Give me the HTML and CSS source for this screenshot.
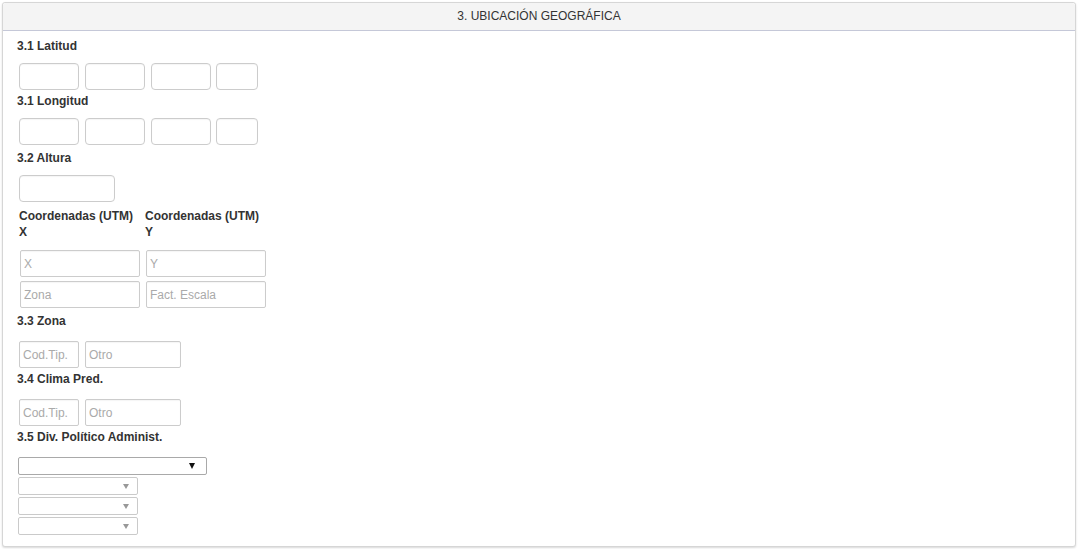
FILE: index.html
```html
<!DOCTYPE html>
<html lang="es">
<head>
<meta charset="utf-8">
<title>Ubicación geográfica</title>
<link rel="stylesheet" href="styles.css">
</head>
<body>
<div class="panel">
  <div class="panel-heading">3. UBICACIÓN GEOGRÁFICA</div>
  <div class="panel-body">
    <div class="lbl">3.1 Latitud</div>
    <div class="row r-lat">
      <input class="inp w60" type="text">
      <input class="inp w60" type="text">
      <input class="inp w60" type="text">
      <input class="inp w42 last" type="text">
    </div>
    <div class="lbl">3.1 Longitud</div>
    <div class="row r-lon">
      <input class="inp w60" type="text">
      <input class="inp w60" type="text">
      <input class="inp w60" type="text">
      <input class="inp w42 last" type="text">
    </div>
    <div class="lbl">3.2 Altura</div>
    <div class="row r-alt">
      <input class="inp w96" type="text">
    </div>
    <div class="coords">
      <div class="col">
        <div class="lbl2">Coordenadas (UTM) X</div>
        <input class="inp w120 sq" type="text" placeholder="X">
        <input class="inp w120 sq" type="text" placeholder="Zona">
      </div>
      <div class="col">
        <div class="lbl2">Coordenadas (UTM) Y</div>
        <input class="inp w120 sq" type="text" placeholder="Y">
        <input class="inp w120 sq" type="text" placeholder="Fact. Escala">
      </div>
    </div>
    <div class="lbl">3.3 Zona</div>
    <div class="row r-zona">
      <input class="inp w60 sq" type="text" placeholder="Cod.Tip.">
      <input class="inp w96 sq" type="text" placeholder="Otro">
    </div>
    <div class="lbl">3.4 Clima Pred.</div>
    <div class="row r-clima">
      <input class="inp w60 sq" type="text" placeholder="Cod.Tip.">
      <input class="inp w96 sq" type="text" placeholder="Otro">
    </div>
    <div class="lbl">3.5 Div. Político Administ.</div>
    <div class="selects">
      <div class="sel sel-wide"><select><option></option></select></div>
      <div class="sel sel-narrow off"><select disabled><option></option></select></div>
      <div class="sel sel-narrow off"><select disabled><option></option></select></div>
      <div class="sel sel-narrow off"><select disabled><option></option></select></div>
    </div>
  </div>
</div>
</body>
</html>
```
FILE: styles.css
```css
* { box-sizing: border-box; }
html, body { margin: 0; padding: 0; background: #fff; }
body {
  font-family: "Liberation Sans", Arial, sans-serif;
  font-size: 12px;
  color: #333;
  padding: 2px 4px 2px 2px;
}
.panel {
  border: 1px solid #d6d6d6;
  border-radius: 3px;
  box-shadow: 0 1px 2px rgba(0,0,0,0.15);
  height: 545px;
  background: #fff;
}
.panel-heading {
  background: #f4f4f4;
  height: 28px;
  line-height: 27px;
  text-align: center;
  border-bottom: 1px solid #c5c8d8;
  border-radius: 3px 3px 0 0;
  color: #333;
}
.panel-body {
  padding: 7px 14px 0 14px;
}
.lbl {
  font-weight: bold;
  line-height: 17px;
  height: 17px;
}
.row {
  display: flex;
  gap: 6px;
  padding-left: 2px;
  margin-top: 8px;
}
.row .last { margin-left: -1px; }
.r-lat { margin-bottom: 3px; }
.r-lon { margin-bottom: 5px; }
.r-alt { margin-bottom: 6px; }
.r-zona { margin-bottom: 3px; margin-top: 11px; }
.r-clima { margin-bottom: 3px; margin-top: 11px; }
.inp {
  display: block;
  height: 27px;
  border: 1px solid #ccc;
  border-radius: 4px;
  font-family: "Liberation Sans", Arial, sans-serif;
  font-size: 12px;
  padding: 0 4px;
  margin: 0;
  color: #555;
  background: #fff;
  box-shadow: inset 0 1px 1px rgba(0,0,0,0.04);
}
.inp.sq { border-radius: 2px; padding: 0 3px; }
.inp::placeholder { color: #aaa; }
.w60 { width: 60px; }
.w42 { width: 42px; }
.w96 { width: 96px; }
.w120 { width: 120px; }
.coords {
  display: flex;
  padding-left: 2px;
  margin-bottom: 5px;
}
.col {
  width: 126px;
  display: flex;
  flex-direction: column;
  gap: 4px;
}
.col .inp { margin-left: 1px; }
.lbl2 {
  font-weight: bold;
  line-height: 16px;
  width: 120px;
  margin-bottom: 6px;
}
.selects {
  margin-top: 11px;
  padding-left: 1px;
  display: flex;
  flex-direction: column;
  gap: 2px;
}
.sel {
  position: relative;
  height: 18px;
}
.sel select {
  appearance: none;
  -webkit-appearance: none;
  width: 100%;
  height: 18px;
  border: 1px solid #a9a9a9;
  border-radius: 2px;
  background: #fff;
  margin: 0;
  padding: 0 2px;
  font-family: "Liberation Sans", Arial, sans-serif;
  font-size: 12px;
}
.sel.off select { border-color: #b5b5b5; }
.sel::after {
  content: "";
  position: absolute;
  top: 6px;
  width: 0;
  height: 0;
  border-left: 3.5px solid transparent;
  border-right: 3.5px solid transparent;
  border-top: 6px solid #111;
  pointer-events: none;
}
.sel-wide { width: 189px; }
.sel-wide::after { right: 12px; }
.sel-narrow { width: 120px; }
.sel-narrow::after { right: 9px; border-top-color: #999; border-top-width: 5px; top: 7px; border-left-width: 3px; border-right-width: 3px; }
```
